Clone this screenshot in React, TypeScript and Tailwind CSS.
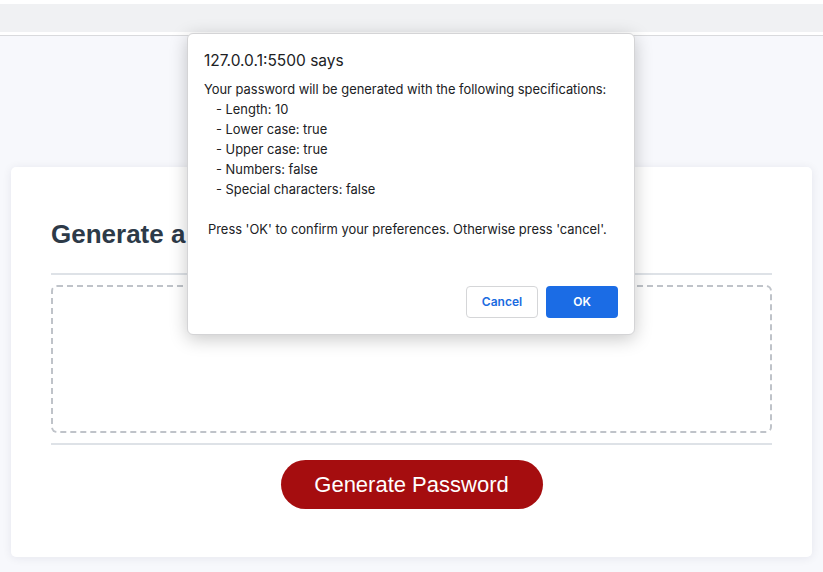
// App.tsx
const specs = [
  "- Length: 10",
  "- Lower case: true",
  "- Upper case: true",
  "- Numbers: false",
  "- Special characters: false",
];

const AlertDialog: React.FC = () => {
  return (
    <div className="absolute left-[187px] top-[33px] w-[448px] h-[302px] bg-white rounded-md border border-[#d4d4d6] shadow-[0_4px_18px_rgba(0,0,0,0.22)] px-4 pt-[17px] pb-4 flex flex-col font-['Inter','Liberation_Sans',sans-serif] text-[#202124]">
      <div className="text-[15.5px] leading-5">127.0.0.1:5500 says</div>
      <div className="mt-[9px] text-[12.9px] leading-5">
        <div>Your password will be generated with the following specifications:</div>
        {specs.map((s) => (
          <div key={s} className="pl-3">{s}</div>
        ))}
        <div className="h-5" />
        <div className="pl-1">Press 'OK' to confirm your preferences. Otherwise press 'cancel'.</div>
      </div>
      <div className="mt-auto flex justify-end gap-2">
        <button className="w-[72px] h-8 rounded-[4px] border border-[#d5d6d8] bg-white text-[12px] font-semibold text-[#1a6be0]">
          Cancel
        </button>
        <button className="w-[72px] h-8 rounded-[4px] bg-[#1b6ce5] text-[12px] font-semibold text-white">
          OK
        </button>
      </div>
    </div>
  );
};

export default function App() {
  return (
    <div className="relative w-[823px] h-[572px] overflow-hidden bg-[#f7f8fc] font-['Liberation_Sans',Arial,sans-serif]">
      <div className="h-1 bg-white" />
      <div className="h-[28px] bg-[#f0f1f3]" />
      <div className="h-[3px] bg-white" />
      <div className="h-px bg-[#d9dadd]" />

      <div className="pt-[131px] px-[11px]">
        <div className="h-[390px] bg-white rounded-[5px] shadow-[0_1px_10px_rgba(20,30,60,0.08)] px-10 pt-[52px]">
          <h2 className="text-[26px] leading-[30px] font-bold text-[#2d3a48]">Generate a Password</h2>
          <div className="mt-[24px] h-[2px] bg-[#dee2e7]" />
          <div className="mt-[10px] h-[148px] rounded-md border-2 border-dashed border-[#bfc3c9]" />
          <div className="mt-[10px] h-[2px] bg-[#dee2e7]" />
          <div className="mt-[15px] flex justify-center">
            <button className="w-[262px] h-[49px] rounded-full bg-[#a50d0f] text-white text-[22px]">
              Generate Password
            </button>
          </div>
        </div>
      </div>

      <AlertDialog />
    </div>
  );
}
